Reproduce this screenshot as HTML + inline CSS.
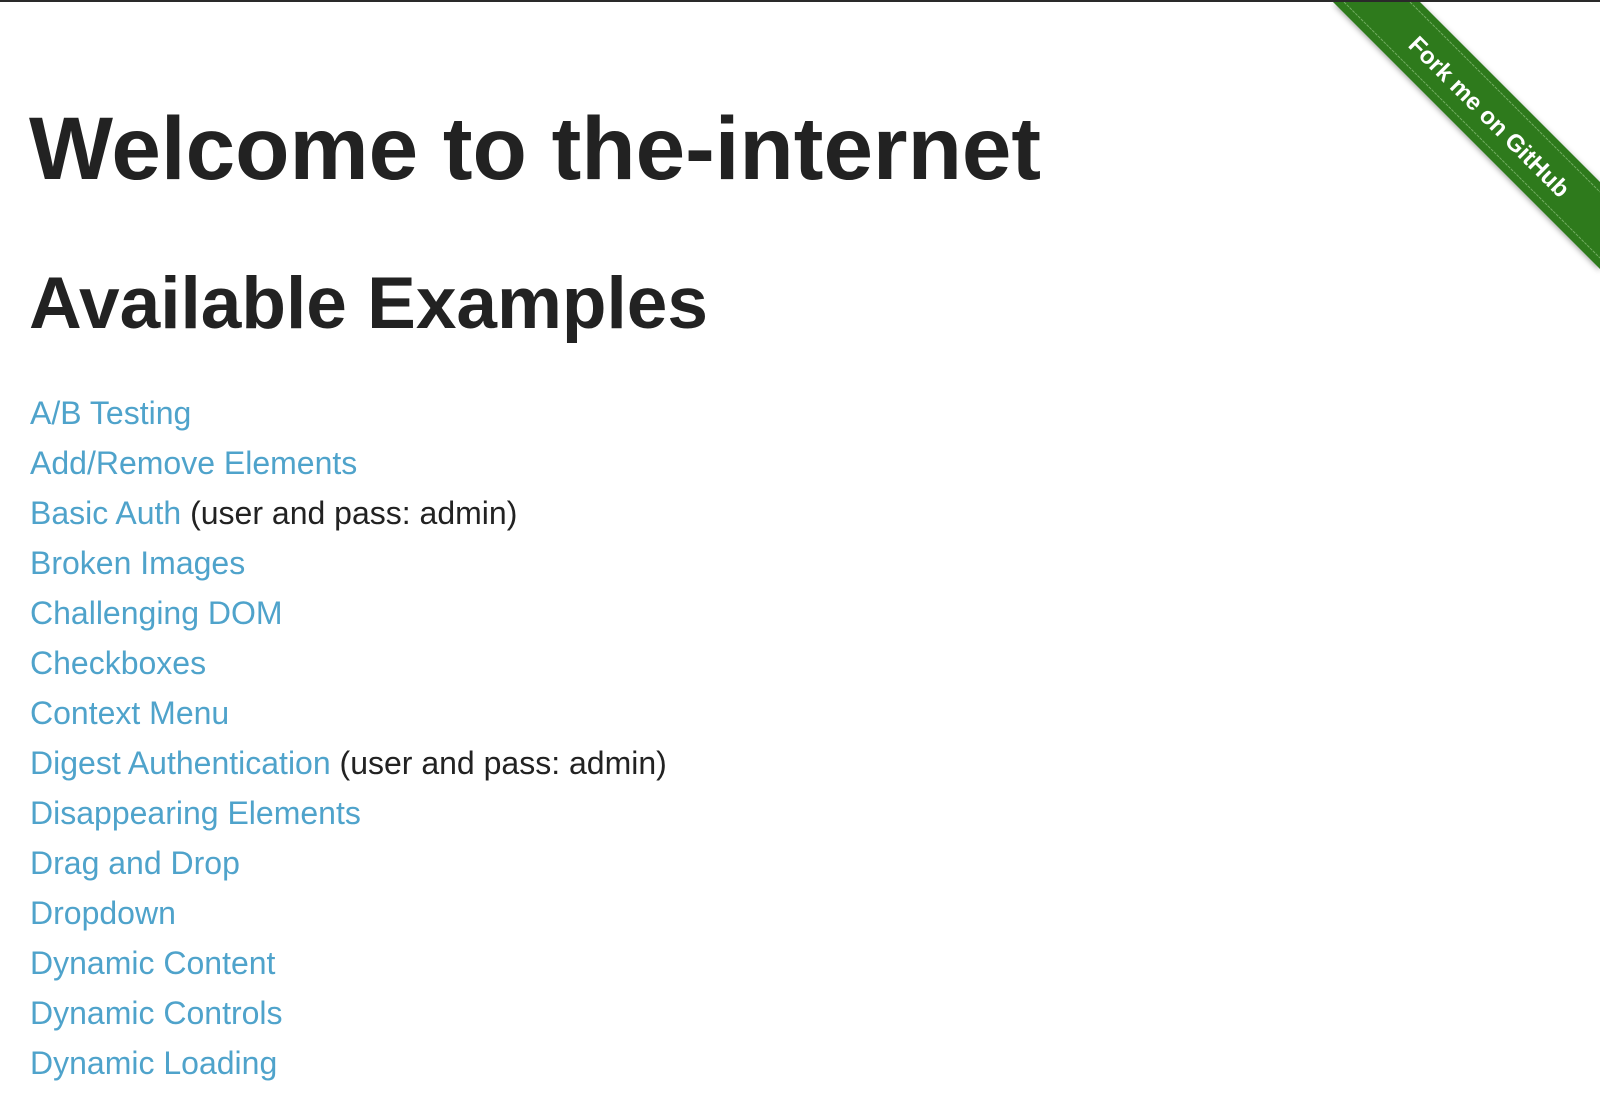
<!DOCTYPE html>
<html><head><meta charset="utf-8"><style>
html,body{margin:0;padding:0;background:#fff;}
body{width:1600px;height:1096px;overflow:hidden;position:relative;border-top:2px solid #2a2a2a;box-sizing:border-box;font-family:"Liberation Sans",Arial,sans-serif;color:#222;}
h1{position:absolute;left:29px;margin:0;font-size:89px;font-weight:bold;line-height:1;top:102px;}
h2{position:absolute;left:29px;margin:0;font-size:73px;font-weight:bold;line-height:1;top:265px;}
ul{position:absolute;left:30px;top:386px;margin:0;padding:0;list-style:none;font-size:32px;line-height:50px;}
a{color:#4fa3cb;text-decoration:none;}
</style></head><body>
<h1>Welcome to the-internet</h1>
<h2>Available Examples</h2>
<ul>
<li><a>A/B Testing</a></li>
<li><a>Add/Remove Elements</a></li>
<li><a>Basic Auth</a> (user and pass: admin)</li>
<li><a>Broken Images</a></li>
<li><a>Challenging DOM</a></li>
<li><a>Checkboxes</a></li>
<li><a>Context Menu</a></li>
<li><a>Digest Authentication</a> (user and pass: admin)</li>
<li><a>Disappearing Elements</a></li>
<li><a>Drag and Drop</a></li>
<li><a>Dropdown</a></li>
<li><a>Dynamic Content</a></li>
<li><a>Dynamic Controls</a></li>
<li><a>Dynamic Loading</a></li>
</ul>
<svg style="position:absolute;left:1330px;top:0" width="270" height="280" viewBox="0 0 270 280">
<defs><filter id="s" x="-20%" y="-20%" width="140%" height="140%"><feDropShadow dx="0" dy="2" stdDeviation="3" flood-opacity="0.35"/></filter></defs>
<polygon points="3,0 90,0 270,180 270,267" fill="#2f7a1e" filter="url(#s)"/>
<line x1="14" y1="0" x2="270" y2="256" stroke="#8fc27f" stroke-width="1" stroke-dasharray="3,1" opacity="0.7"/>
<line x1="80" y1="0" x2="270" y2="190" stroke="#8fc27f" stroke-width="1" stroke-dasharray="3,1" opacity="0.7"/>
<text x="158" y="116" transform="rotate(45 158 116)" text-anchor="middle" dominant-baseline="middle" fill="#fff" font-family="Liberation Sans, sans-serif" font-size="24" font-weight="bold">Fork me on GitHub</text>
</svg>
</body></html>
